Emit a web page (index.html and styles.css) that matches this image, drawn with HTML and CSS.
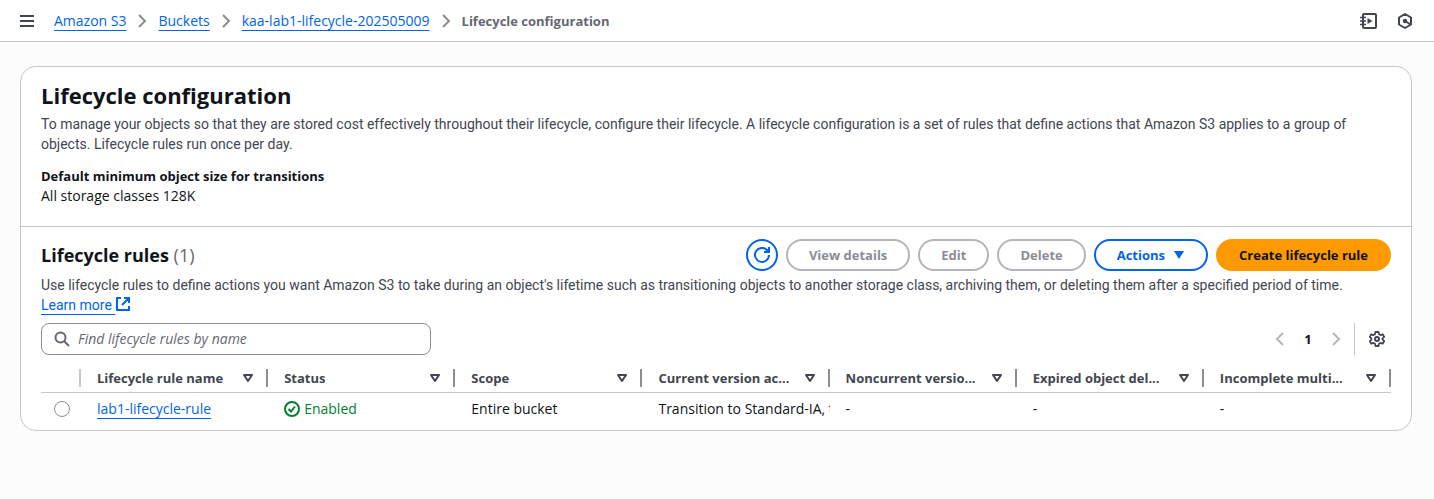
FILE: index.html
```html
<!DOCTYPE html>
<html lang="en">
<head>
<meta charset="utf-8">
<meta name="viewport" content="width=device-width, initial-scale=1">
<title>Lifecycle configuration</title>
<link rel="stylesheet" href="styles.css">
</head>
<body>
<svg width="0" height="0" class="defs" aria-hidden="true">
  <symbol id="chevron" viewBox="0 0 16 16"><path d="M5 2l6 6-6 6" fill="none" stroke="currentColor" stroke-width="2"/></symbol>
  <symbol id="sort" viewBox="0 0 12 12"><path d="M2 3h8L6 9z" fill="none" stroke="currentColor" stroke-width="2" stroke-linejoin="round"/></symbol>
</svg>
<header class="topbar">
  <button class="icon-btn" aria-label="Open navigation"><svg width="16" height="16" viewBox="0 0 16 16"><path d="M1 3h14M1 8h14M1 13h14" fill="none" stroke="currentColor" stroke-width="2"/></svg></button>
  <nav class="crumbs" aria-label="Breadcrumbs">
    <a class="link" href="#">Amazon S3</a>
    <svg class="crumb-sep" width="16" height="16"><use href="#chevron"/></svg>
    <a class="link" href="#">Buckets</a>
    <svg class="crumb-sep" width="16" height="16"><use href="#chevron"/></svg>
    <a class="link" href="#">kaa-lab1-lifecycle-202505009</a>
    <svg class="crumb-sep" width="16" height="16"><use href="#chevron"/></svg>
    <span class="crumb-current">Lifecycle configuration</span>
  </nav>
  <div class="tools">
    <button class="icon-btn" aria-label="Tutorials"><svg width="18" height="16" viewBox="0 0 18 16"><g fill="none" stroke="currentColor" stroke-width="2"><rect x="4" y="1" width="13" height="14" rx="1"/><path d="M1 4.500h6M1 8h6M1 11.500h6" stroke-width="1.700"/></g><path d="M8.500 5l5 3-5 3z" fill="currentColor"/></svg></button>
    <button class="icon-btn" aria-label="Diagnostics"><svg width="16" height="16" viewBox="0 0 16 16"><path d="M8 1l6 3.500v7L8 15l-6-3.500v-7z" fill="none" stroke="currentColor" stroke-width="2" stroke-linejoin="round"/><circle cx="8" cy="8" r="2.200" fill="currentColor"/><path d="M8 8l5.500 3.500" stroke="currentColor" stroke-width="2"/></svg></button>
  </div>
</header>
<main class="page">
  <div class="card">
    <section class="summary">
      <h1>Lifecycle configuration</h1>
      <p class="desc">To manage your objects so that they are stored cost effectively throughout their lifecycle, configure their lifecycle. A lifecycle configuration is a set of rules that define actions that Amazon S3 applies to a group of objects.&nbsp;Lifecycle rules run once per day.</p>
      <dl><dt>Default minimum object size for transitions</dt><dd>All storage classes 128K</dd></dl>
    </section>
    <section class="rules">
      <div class="rules-head">
        <h2>Lifecycle rules <span class="count">(1)</span></h2>
        <div class="actions">
          <button class="btn btn-round" aria-label="Refresh"><svg width="16" height="16" viewBox="0 0 16 16"><path d="M15 8a7 7 0 1 1-2-5l2 2M15 0v5h-5" fill="none" stroke="currentColor" stroke-width="2"/></svg></button>
          <button class="btn" disabled>View details</button>
          <button class="btn" disabled>Edit</button>
          <button class="btn" disabled>Delete</button>
          <button class="btn">Actions <svg width="12" height="12" viewBox="0 0 12 12"><path d="M1 2h10L6 10z" fill="currentColor"/></svg></button>
          <button class="btn btn-primary">Create lifecycle rule</button>
        </div>
      </div>
      <p class="desc">Use lifecycle rules to define actions you want Amazon S3 to take during an object's lifetime such as transitioning objects to another storage class, archiving them, or deleting them after a specified period of time. <span class="learn"><a class="link" href="#">Learn more&nbsp;</a><svg class="external" width="16" height="16" viewBox="0 0 16 16"><path d="M6 2H2v12h12v-4M9 2h5v5M14 2L7 9" fill="none" stroke="currentColor" stroke-width="2"/></svg></span></p>
      <div class="filters">
        <div class="search">
          <svg width="16" height="16" viewBox="0 0 16 16"><circle cx="6.500" cy="6.500" r="5" fill="none" stroke="currentColor" stroke-width="2"/><path d="M10 10l5 5" stroke="currentColor" stroke-width="2"/></svg>
          <input type="text" placeholder="Find lifecycle rules by name" aria-label="Find lifecycle rules by name">
        </div>
        <div class="pager">
          <button class="icon-btn off" aria-label="Previous page" disabled><svg class="flip" width="16" height="16"><use href="#chevron"/></svg></button>
          <button class="page-no" aria-label="Page 1">1</button>
          <button class="icon-btn off" aria-label="Next page" disabled><svg width="16" height="16"><use href="#chevron"/></svg></button>
          <div class="prefs"><button class="icon-btn" aria-label="Preferences"><svg width="16" height="16" viewBox="0 0 16 16" fill="none" stroke="currentColor"><path d="M6.500 1h3l.5 2.200 1.500.9 2.200-.8 1.500 2.600L13.600 7.400v1.200l1.600 1.500-1.500 2.600-2.200-.8-1.500.9-.5 2.200h-3L6 12.800l-1.500-.9-2.200.8-1.500-2.600 1.600-1.500V7.400L.8 5.900l1.500-2.600 2.200.8L6 3.200z" stroke-width="1.800" stroke-linejoin="round"/><circle cx="8" cy="8" r="2" stroke-width="2"/></svg></button></div>
        </div>
      </div>
      <table>
        <colgroup><col class="col-select"><col span="7"></colgroup>
        <thead><tr>
          <th aria-label="Selection"><div class="th sel"></div></th>
          <th><div class="th"><span>Lifecycle rule name</span><svg width="12" height="12"><use href="#sort"/></svg></div></th>
          <th><div class="th"><span>Status</span><svg width="12" height="12"><use href="#sort"/></svg></div></th>
          <th><div class="th"><span>Scope</span><svg width="12" height="12"><use href="#sort"/></svg></div></th>
          <th><div class="th"><span>Current version ac...</span><svg width="12" height="12"><use href="#sort"/></svg></div></th>
          <th><div class="th"><span>Noncurrent versio...</span><svg width="12" height="12"><use href="#sort"/></svg></div></th>
          <th><div class="th"><span>Expired object del...</span><svg width="12" height="12"><use href="#sort"/></svg></div></th>
          <th><div class="th"><span>Incomplete multi...</span><svg width="12" height="12"><use href="#sort"/></svg></div></th>
        </tr></thead>
        <tbody><tr>
          <td class="pick"><input type="radio" name="rule" aria-label="Select lab1-lifecycle-rule"></td>
          <td><a class="link" href="#">lab1-lifecycle-rule</a></td>
          <td><span class="ok"><svg width="16" height="16" viewBox="0 0 16 16" fill="none" stroke="currentColor" stroke-width="2"><circle cx="8" cy="8" r="7"/><path d="M4.500 8l2.500 2.500L11 5.500"/></svg>Enabled</span></td>
          <td>Entire bucket</td>
          <td>Transition to Standard-IA, t</td>
          <td>-</td><td>-</td><td>-</td>
        </tr></tbody>
      </table>
    </section>
  </div>
</main>
</body>
</html>
```
FILE: styles.css
```css
* { box-sizing: border-box; }
body { margin: 0; background: #fcfcfd; color: #0f141a; font: 14px/20px "Open Sans", "Noto Sans", sans-serif; }
h1, h2, p, dl, dd { margin: 0; }
svg { display: block; flex: none; }
.defs { position: absolute; }
button, input { font: inherit; color: inherit; }
.link { color: #0064f0; text-decoration: underline; text-decoration-thickness: 1px; text-underline-offset: 4px; text-decoration-skip-ink: none; }
.icon-btn { display: flex; align-items: center; justify-content: center; padding: 0; border: 0; background: none; color: #424650; }
.topbar { display: flex; align-items: center; height: 42px; padding: 0 21px 0 19px; background: #fff; border-bottom: 1px solid #c6c6cd; }
.crumbs { display: flex; align-items: center; gap: 8px; margin-left: 19px; }
.crumb-sep { color: #8c8c94; }
.crumb-current { color: #656871; font-size: 13px; font-weight: 700; }
.tools { display: flex; gap: 20px; margin-left: auto; }
.page { padding: 24px 22px 24px 20px; }
.card { background: #fff; border: 1px solid #c6c6cd; border-radius: 16px; }
.summary { padding: 13px 20px 20px; border-bottom: 1px solid #c6c6cd; }
h1 { font-size: 22px; line-height: 30px; margin-bottom: 4px; }
.desc { color: #424650; font-family: Roboto, "Open Sans", sans-serif; font-size: 14px; }
dl { margin-top: 12px; }
dt { font-size: 13px; font-weight: 700; }
.rules { padding: 12px 20px 5px; }
.rules-head { display: flex; align-items: center; justify-content: space-between; margin-bottom: 4px; }
h2 { font-size: 18px; line-height: 24px; }
.count { color: #656871; font-weight: 400; }
.actions { display: flex; gap: 8px; }
.btn { display: flex; align-items: center; gap: 8px; height: 32px; padding: 0 21px; border: 2px solid #0064f0; border-radius: 16px; background: #fff; color: #0064f0; font-size: 13px; font-weight: 700; white-space: nowrap; }
.btn:disabled { border-color: #b4b4bb; color: #8c8c94; }
.btn-round { width: 32px; padding: 0; justify-content: center; }
.btn-primary { background: #ff9900; border-color: #ff9900; color: #0f141a; }
.learn { color: #0064f0; white-space: nowrap; }
.external { display: inline-block; vertical-align: -2px; }
.filters { display: flex; justify-content: space-between; align-items: center; margin-top: 8px; }
.search { display: flex; align-items: center; gap: 8px; width: 390px; height: 32px; padding: 0 12px; border: 1px solid #8c8c94; border-radius: 8px; color: #656871; }
.search input { flex: 1; min-width: 0; padding: 0; border: 0; outline: 0; background: none; }
.search input::placeholder { color: #656871; font-style: italic; opacity: 1; }
.pager { display: flex; align-items: center; }
.page-no { width: 40px; padding: 0; border: 0; background: none; font-size: 13px; font-weight: 700; }
.icon-btn.off { color: #b4b4bb; }
.flip { transform: scaleX(-1); }
.prefs { display: flex; align-items: center; height: 32px; margin-left: 10px; padding: 0 6px 0 14px; border-left: 1px solid #c6c6cd; }
table { width: 100%; margin-top: 8px; table-layout: fixed; border-collapse: collapse; }
.col-select { width: 40px; }
th { padding: 0; text-align: left; font-size: 13px; color: #424650; border-bottom: 1px solid #c6c6cd; }
.th { display: flex; align-items: center; justify-content: space-between; gap: 12px; height: 18px; margin: 6px 0 5px; padding: 0 12px 0 16px; border-right: 2px solid #8c8c94; }
.th.sel { border-color: #c6c6cd; }
.th span { overflow: hidden; text-overflow: ellipsis; white-space: nowrap; }
td { height: 32px; padding: 0 0 0 16px; overflow: hidden; white-space: nowrap; }
td.pick { padding: 0; }
.pick input { display: block; appearance: none; width: 16px; height: 16px; margin: 0 13px; border: 1px solid #8c8c94; border-radius: 50%; background: #fff; }
.ok { display: flex; align-items: center; gap: 4px; color: #00802f; }
```
